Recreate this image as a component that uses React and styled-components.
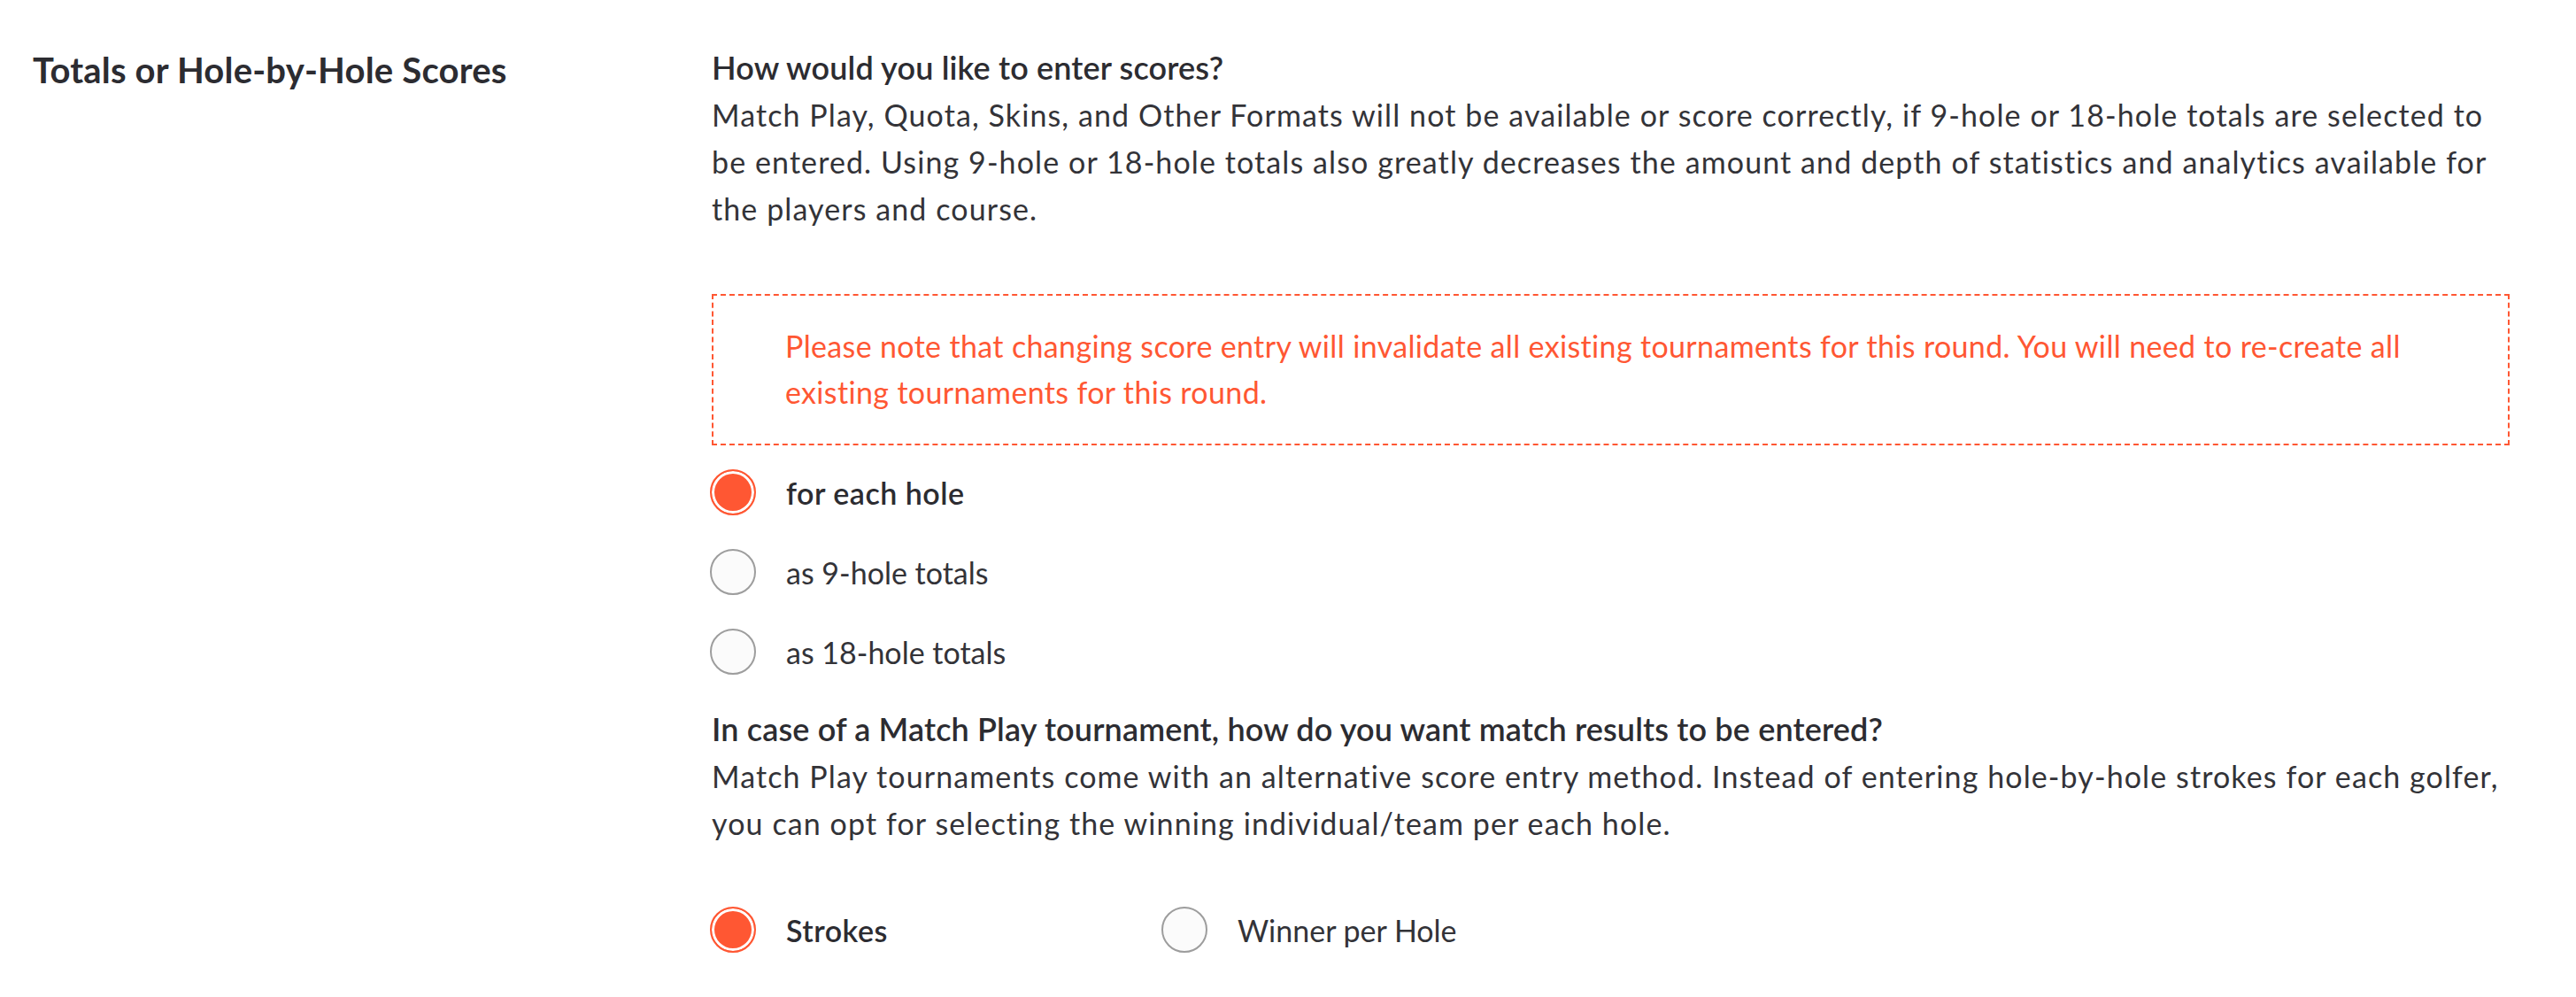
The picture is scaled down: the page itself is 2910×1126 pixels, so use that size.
import React from "react";
import styled, { createGlobalStyle, css } from "styled-components";

const GlobalStyle = createGlobalStyle`
  html, body {
    margin: 0;
    padding: 0;
    background: #ffffff;
  }
  body {
    font-family: Lato, "Open Sans", "Liberation Sans", sans-serif;
    color: #333338;
  }
`;

const Section = styled.section`
  display: grid;
  grid-template-columns: 767px 1fr;
  padding: 50px 75px 0 37px;
  min-height: 1126px;
  box-sizing: border-box;
`;

const SectionTitle = styled.h2`
  margin: 3px 0 0;
  font-size: 40px;
  line-height: 53px;
  font-weight: 700;
  letter-spacing: 0.2px;
  color: #2c2c31;
`;

const Content = styled.div`
  display: flex;
  flex-direction: column;
`;

const Question = styled.h3`
  margin: ${(p) => p.$top || 0}px 0 0;
  font-size: 36px;
  line-height: 53px;
  font-weight: 600;
  letter-spacing: 0.15px;
  color: #2c2c31;
`;

const Help = styled.p`
  margin: 0;
  font-size: 34px;
  line-height: 53px;
  font-weight: 400;
  letter-spacing: 1.1px;
  color: #333338;
  white-space: nowrap;
`;

const Warning = styled.div`
  margin-top: 70px;
  border: 2px dashed #ff5733;
  padding: 31px 81px 32px;
  color: #ff5733;
  font-size: 34px;
  line-height: 52px;
  letter-spacing: 0.35px;
  white-space: nowrap;
`;

const RadioList = styled.div`
  display: flex;
  flex-direction: column;
  margin-top: 8px;
`;

const InlineRadios = styled.div`
  display: flex;
  margin-top: 49px;
`;

const Option = styled.label`
  display: flex;
  align-items: center;
  gap: 34px;
  height: 90px;
  width: ${(p) => (p.$width ? `${p.$width}px` : "auto")};
  font-size: 34px;
  font-weight: ${(p) => (p.$checked ? 600 : 400)};
  letter-spacing: ${(p) => (p.$checked ? "0.5px" : "0")};
  color: ${(p) => (p.$checked ? "#2c2c31" : "#333338")};
  cursor: pointer;
`;

const RadioDot = styled.span`
  flex: none;
  box-sizing: border-box;
  width: 52px;
  height: 52px;
  margin-left: -2px;
  border-radius: 50%;
  ${(p) =>
    p.$checked
      ? css`
          border: 2px solid #ff5733;
          background: #ff5733;
          box-shadow: inset 0 0 0 3px #ffffff;
        `
      : css`
          border: 2px solid #9d9d9d;
          background: #fbfbfb;
        `}
`;

function Radio({ checked, label, width }) {
  return (
    <Option $checked={checked} $width={width}>
      <RadioDot $checked={checked} />
      <span>{label}</span>
    </Option>
  );
}

export default function App() {
  return (
    <>
      <GlobalStyle />
      <Section>
        <SectionTitle>Totals or Hole-by-Hole Scores</SectionTitle>
        <Content>
          <Question>How would you like to enter scores?</Question>
          <Help>
            Match Play, Quota, Skins, and Other Formats will not be available or score correctly, if 9-hole or 18-hole totals are selected to
            <br />
            be entered. Using 9-hole or 18-hole totals also greatly decreases the amount and depth of statistics and analytics available for
            <br />
            the players and course.
          </Help>
          <Warning>
            Please note that changing score entry will invalidate all existing tournaments for this round. You will need to re-create all
            <br />
            existing tournaments for this round.
          </Warning>
          <RadioList>
            <Radio checked label="for each hole" />
            <Radio label="as 9-hole totals" />
            <Radio label="as 18-hole totals" />
          </RadioList>
          <Question $top={16}>
            In case of a Match Play tournament, how do you want match results to be entered?
          </Question>
          <Help>
            Match Play tournaments come with an alternative score entry method. Instead of entering hole-by-hole strokes for each golfer,
            <br />
            you can opt for selecting the winning individual/team per each hole.
          </Help>
          <InlineRadios>
            <Radio checked label="Strokes" width={510} />
            <Radio label="Winner per Hole" />
          </InlineRadios>
        </Content>
      </Section>
    </>
  );
}
